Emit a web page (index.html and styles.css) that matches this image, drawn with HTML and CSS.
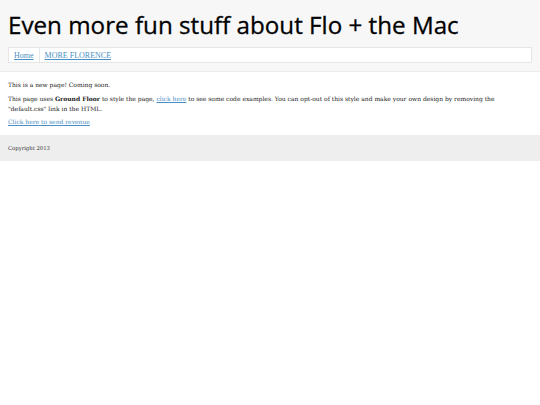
FILE: index.html
```html
<!DOCTYPE html>
<html>
<head>
<meta charset="utf-8">
<link rel="stylesheet" href="styles.css">
</head>
<body>
<header class="site-header">
  <h1 class="site-title">Even more fun stuff about Flo + the Mac</h1>
  <nav class="nav">
    <a href="#" class="nav-link">Home</a>
    <a href="#" class="nav-link">MORE FLORENCE</a>
  </nav>
</header>
<main class="content">
  <p>This is a new page! Coming soon.</p>
  <p>This page uses <strong>Ground Floor</strong> to style the page, <a href="#">click here</a> to see some code examples. You can opt-out of this style and make your own design by removing the "default.css" link in the HTML.</p>
  <p><a href="#">Click here to send revenue</a></p>
</main>
<footer class="site-footer">Copyright 2013</footer>
</body>
</html>
```
FILE: styles.css
```css
html, body { margin: 0; padding: 0; background: #fff; }
body { font-family: "DejaVu Serif", Georgia, serif; font-size: 6px; color: #1a1a1a; }
a { color: #4a8fc4; }
.site-header {
  background: #f7f7f7;
  padding: 8px 8px 8px;
  border-bottom: 1px solid #ececec;
}
.site-title {
  margin: 0 0 6px;
  font-family: "Open Sans", sans-serif;
  font-weight: 400;
  font-size: 24.2px;
  line-height: 33px;
  color: #000;
  -webkit-text-stroke: 0.3px #000;
}
.nav {
  display: flex;
  background: #fff;
  border: 1px solid #e6e6e6;
  height: 14px;
  align-items: stretch;
}
.nav-link {
  display: flex;
  align-items: center;
  padding: 0 5px;
  font-size: 8px;
  font-family: "Liberation Serif", serif;
  color: #4a8fc4;
}
.nav-link + .nav-link { border-left: 1px solid #e6e6e6; }
.content { padding: 8px 8px 8px; }
.content p { margin: 0 0 4px; line-height: 10px; }
.content p:nth-child(3) { margin-top: -1px; }
.content p:last-child { margin-bottom: 0; }
.site-footer {
  background: #eee;
  padding: 9px 8px 9px;
  font-size: 5.3px;
  line-height: 8px;
  color: #333;
}
```
